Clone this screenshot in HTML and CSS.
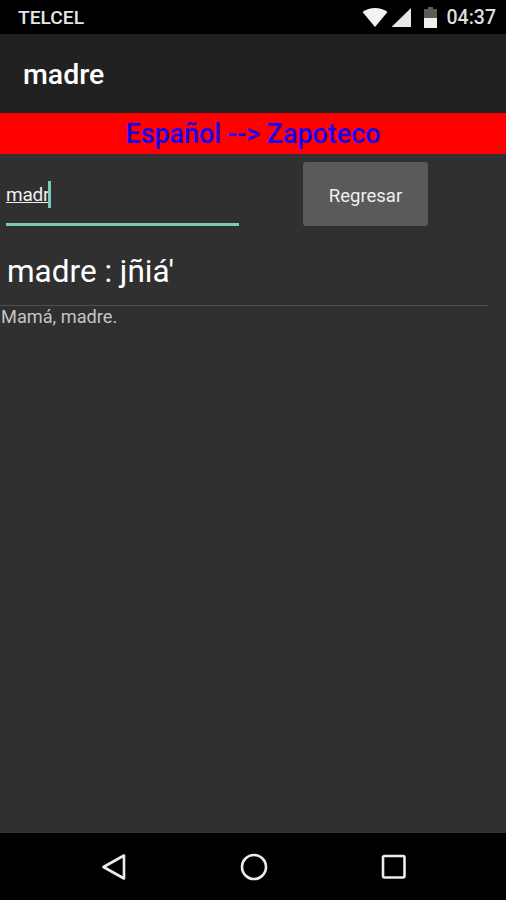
FILE: index.html
```html
<!DOCTYPE html>
<html lang="es">
<head>
<meta charset="utf-8">
<title>madre</title>
<link rel="stylesheet" href="styles.css">
</head>
<body>
<div class="phone">
  <header class="status">
    <span class="carrier">TELCEL</span>
    <div class="status-right">
      <svg class="ic-wifi" width="26" height="19" viewBox="0 0 26 19"><path d="M0.500 4C4 1.200 8.500 0 13 0s9 1.200 12.500 4L13 19z" fill="#f2f2f2"/></svg>
      <svg class="ic-signal" width="20" height="19" viewBox="0 0 20 19"><path d="M20 0V19H0.500z" fill="#e8e8e8"/></svg>
      <svg class="ic-batt" width="13" height="21" viewBox="0 0 13 21"><path d="M4 0h5v2h4v9H0V2h4z" fill="#5c5c5c"/><rect y="11" width="13" height="10" fill="#f0f0f0"/></svg>
      <span class="time">04:37</span>
    </div>
  </header>
  <div class="appbar"><span class="title">madre</span></div>
  <div class="banner">Español --&gt; Zapoteco</div>
  <main class="content">
    <div class="search-row">
      <div class="field">
        <div class="field-text"><span class="typed">madr</span><span class="caret"></span></div>
        <div class="field-line"></div>
      </div>
      <button class="back" type="button">Regresar</button>
    </div>
    <h1 class="word">madre : jñiá'</h1>
    <hr class="rule">
    <p class="def">Mamá, madre.</p>
  </main>
  <nav class="navbar">
    <svg width="26" height="28" viewBox="0 0 26 28"><path d="M23 2.500V25.500L2.500 14z" fill="none" stroke="#ececec" stroke-width="2.600" stroke-linejoin="round"/></svg>
    <svg width="28" height="28" viewBox="0 0 28 28"><circle cx="14" cy="14" r="12" fill="none" stroke="#ececec" stroke-width="2.600"/></svg>
    <svg width="26" height="26" viewBox="0 0 26 26"><rect x="2" y="2" width="21.500" height="21.500" rx="1.500" fill="none" stroke="#ececec" stroke-width="2.600"/></svg>
  </nav>
</div>
</body>
</html>
```
FILE: styles.css
```css
* { box-sizing: border-box; }
html, body { margin: 0; padding: 0; }
body { background: #303030; font-family: Roboto, "Liberation Sans", sans-serif; }
.phone { width: 506px; height: 900px; display: flex; flex-direction: column; overflow: hidden; background: #303030; }

.status { height: 34px; flex: none; background: #000; display: flex; align-items: center; justify-content: space-between; padding: 1px 10px 0 18px; }
.carrier { color: #e6e6e6; font-size: 19.200px; font-weight: 500; }
.status-right { display: flex; align-items: center; }
.ic-wifi { margin-right: 3px; }
.ic-signal { margin-right: 13px; }
.ic-batt { margin-right: 10px; }
.time { color: #dedede; font-size: 19.500px; font-weight: 500; }

.appbar { height: 79px; flex: none; background: #212121; display: flex; align-items: center; padding: 2px 0 0 23px; }
.title { color: #fff; font-size: 28.500px; font-weight: 500; }

.banner { height: 41px; flex: none; background: #f00; color: #1a00f0; font-size: 26.900px; font-weight: 500; line-height: 43px; text-align: center; }

.content { flex: 1; display: flex; flex-direction: column; min-height: 0; }
.search-row { display: flex; align-items: flex-start; padding-top: 8px; height: 84px; flex: none; }
.field { width: 233px; margin: 0 64px 0 6px; padding-top: 18px; }
.field-text { height: 29px; display: flex; align-items: center; }
.typed { color: #f0f0f0; font-size: 19px; text-decoration: underline; line-height: 24px; letter-spacing: -0.200px; }
.caret { width: 3px; height: 27px; background: #7cc8ba; margin-left: -1px; }
.field-line { height: 3px; background: #7cc8ba; margin-top: 14px; }
.back { width: 125px; height: 64px; flex: none; border: 0; border-radius: 3px; background: #5a5a5b; color: #f0f0f0; font: 400 18.500px Roboto, "Liberation Sans", sans-serif; padding: 3px 0 0; }

.word { margin: 0; padding: 14px 0 0 7px; height: 67px; color: #fff; font-size: 31.500px; font-weight: 400; line-height: 40px; flex: none; }
.rule { margin: 0; width: 488px; height: 1px; border: 0; background: #4f4f4f; flex: none; }
.def { margin: 0; padding: 0 0 0 1px; color: #c4c4c4; font-size: 18.200px; line-height: 21px; }

.navbar { height: 67px; flex: none; background: #000; display: flex; align-items: center; padding: 0 99px 0 101px; justify-content: space-between; }
```
